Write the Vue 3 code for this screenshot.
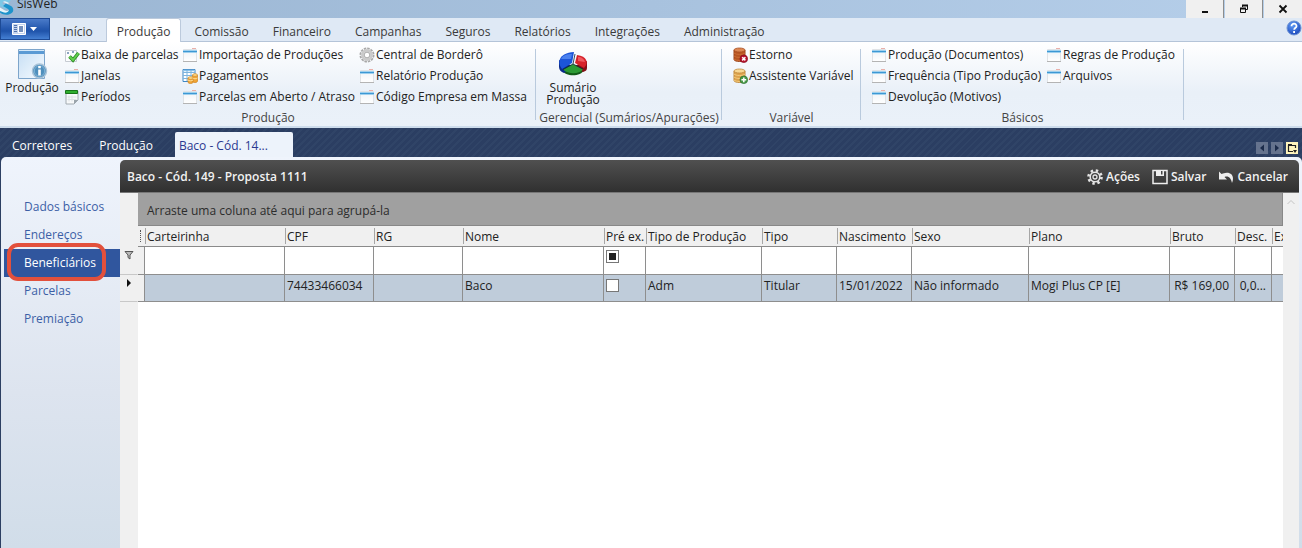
<script setup>
import { ref } from 'vue'

const menuTabs = ['Início', 'Produção', 'Comissão', 'Financeiro', 'Campanhas', 'Seguros', 'Relatórios', 'Integrações', 'Administração']
const activeMenu = ref('Produção')

const ribbonGroups = [
  {
    id: 'producao',
    title: 'Produção',
    big: { label: 'Produção', icon: 'info-window' },
    columns: [
      [
        { label: 'Baixa de parcelas', icon: 'check' },
        { label: 'Janelas', icon: 'window' },
        { label: 'Períodos', icon: 'calendar' }
      ],
      [
        { label: 'Importação de Produções', icon: 'window' },
        { label: 'Pagamentos', icon: 'payments' },
        { label: 'Parcelas em Aberto / Atraso', icon: 'window' }
      ],
      [
        { label: 'Central de Borderô', icon: 'gear' },
        { label: 'Relatório Produção', icon: 'window' },
        { label: 'Código Empresa em Massa', icon: 'window' }
      ]
    ]
  },
  { id: 'gerencial', title: 'Gerencial (Sumários/Apurações)', big: { label: 'Sumário Produção', icon: 'pie' }, columns: [] },
  {
    id: 'variavel',
    title: 'Variável',
    columns: [
      [
        { label: 'Estorno', icon: 'coins-remove' },
        { label: 'Assistente Variável', icon: 'coins-add' }
      ]
    ]
  },
  {
    id: 'basicos',
    title: 'Básicos',
    columns: [
      [
        { label: 'Produção (Documentos)', icon: 'window' },
        { label: 'Frequência (Tipo Produção)', icon: 'window' },
        { label: 'Devolução (Motivos)', icon: 'window' }
      ],
      [
        { label: 'Regras de Produção', icon: 'window' },
        { label: 'Arquivos', icon: 'window' }
      ]
    ]
  }
]

const docTabs = ['Corretores', 'Produção', 'Baco - Cód. 14...']
const activeDoc = ref('Baco - Cód. 14...')

const sections = ['Dados básicos', 'Endereços', 'Beneficiários', 'Parcelas', 'Premiação']
const activeSection = ref('Beneficiários')

const columns = [
  { key: 'carteirinha', label: 'Carteirinha', width: 140 },
  { key: 'cpf', label: 'CPF', width: 89 },
  { key: 'rg', label: 'RG', width: 89 },
  { key: 'nome', label: 'Nome', width: 141 },
  { key: 'preEx', label: 'Pré ex.', width: 42, check: true },
  { key: 'tipoProducao', label: 'Tipo de Produção', width: 116 },
  { key: 'tipo', label: 'Tipo', width: 75 },
  { key: 'nascimento', label: 'Nascimento', width: 75 },
  { key: 'sexo', label: 'Sexo', width: 117 },
  { key: 'plano', label: 'Plano', width: 141 },
  { key: 'bruto', label: 'Bruto', width: 65, right: true },
  { key: 'desc', label: 'Desc.', width: 37, right: true },
  { key: 'ex', label: 'Ex', width: 0 }
]

const rows = ref([
  {
    cpf: '74433466034',
    nome: 'Baco',
    preEx: false,
    tipoProducao: 'Adm',
    tipo: 'Titular',
    nascimento: '15/01/2022',
    sexo: 'Não informado',
    plano: 'Mogi Plus CP [E]',
    bruto: 'R$ 169,00',
    desc: '0,0...'
  }
])
const filters = ref({})
</script>

<template>
  <div class="app">
    <svg class="sprite" aria-hidden="true">
      <defs>
        <linearGradient id="paper" x1="0" y1="0" x2="0" y2="1">
          <stop offset="0" stop-color="#eef2f6" />
          <stop offset="1" stop-color="#fff" />
        </linearGradient>
        <linearGradient id="sky" x1="0" y1="0" x2="1" y2="1">
          <stop offset="0" stop-color="#c5def4" />
          <stop offset="1" stop-color="#f7fbff" />
        </linearGradient>
        <radialGradient id="ball" cx=".4" cy=".3" r=".8">
          <stop offset="0" stop-color="#5f9bf5" />
          <stop offset="1" stop-color="#143fb5" />
        </radialGradient>
      </defs>
      <symbol id="window" viewBox="0 0 16 16">
        <path d="M1.500 2.500h13v12h-13z" fill="url(#paper)" stroke="#e0e3e6" />
        <path d="M1 14.500h14" stroke="#b4b4b4" />
        <path d="M1 4.500h14" stroke="#9fd0ee" stroke-width="3" />
        <path d="M1 4.500h14" stroke="#3c98d4" />
        <path d="M10 1.500h4" stroke="#eab0aa" />
      </symbol>
      <symbol id="check" viewBox="0 0 16 16">
        <path d="M1.500 3.500h11v11h-11z" fill="#fcfdfe" stroke="#c6cbd2" />
        <path d="M3 6h2M8 5h2" stroke="#6788ad" stroke-width="1.500" />
        <path d="M5.500 9.500l3.500 3.500 5.500-7" fill="none" stroke="#2c8b25" stroke-width="3.600" />
        <path d="M5.500 9.500l3.500 3.500 5.500-7" fill="none" stroke="#62cf4e" stroke-width="2" />
      </symbol>
      <symbol id="calendar" viewBox="0 0 16 16">
        <path d="M2 2h12v9l-4 4H2z" fill="#f7f9fa" stroke="#a3abb1" />
        <path d="M1.500 1.500h12v3h-12z" fill="#2fae2f" stroke="#187418" />
        <path d="M3.500 8h9M3.500 10.500h9M5 6.500v6M8 6.500v6" stroke="#dde2e5" />
        <path d="M10 15v-4h4z" fill="#9aa4ab" />
      </symbol>
      <symbol id="payments" viewBox="0 0 16 16">
        <path d="M1 1.500h12v12H1z" fill="#fff" stroke="#3f87c3" />
        <path d="M1.500 2.500h11" stroke="#8cc4ec" stroke-width="1.500" />
        <path d="M1 4.500h12M1 7.500h12M1 10.500h12M5 2v11M9 2v11" stroke="#7db4de" />
        <path d="M6 10v4c0 2 5 2 5 0v-4M10.500 7v6c0 2 5 2 5 0V7" fill="#f0a536" stroke="#d08a2c" stroke-width=".8" />
        <ellipse cx="8.500" cy="10" rx="2.500" ry="1.300" fill="#ffdb88" stroke="#d08a2c" stroke-width=".7" />
        <ellipse cx="13" cy="7" rx="2.500" ry="1.300" fill="#ffdb88" stroke="#d08a2c" stroke-width=".7" />
        <path d="M6 12c1 1 4 1 5 0M10.500 10c1 1 4 1 5 0" fill="none" stroke="#ffe09a" />
      </symbol>
      <symbol id="gear" viewBox="0 0 16 16">
        <circle cx="8" cy="8" r="6.600" fill="none" stroke="#a8a8a8" stroke-width="1.800" stroke-dasharray="2.500 .956" />
        <circle cx="8" cy="8" r="4.600" fill="#e6e6e6" stroke="#cacaca" stroke-width="2.600" />
        <circle cx="8" cy="8" r="2.800" fill="#fff" stroke="#9b9b9b" stroke-width=".8" />
      </symbol>
      <symbol id="coins-remove" viewBox="0 0 16 16">
        <path d="M2 3v9.500c0 2.600 11 2.600 11 0V3" fill="#b75521" stroke="#9c4317" />
        <ellipse cx="7.500" cy="3" rx="5.500" ry="2" fill="#dc8752" stroke="#a84d20" stroke-width=".8" />
        <path d="M2 6c2 2 9 2 11 0M2 9c2 2 9 2 11 0M2 12c2 2 9 2 11 0" fill="none" stroke="#cb6b34" />
        <circle cx="11.800" cy="11.800" r="3.800" fill="#b8122c" stroke="#850a1d" stroke-width=".7" />
        <path d="M10.200 10.200l3.200 3.200M13.400 10.200l-3.200 3.200" stroke="#fff" stroke-width="1.500" />
      </symbol>
      <symbol id="coins-add" viewBox="0 0 16 16">
        <path d="M2 3v9.500c0 2.600 11 2.600 11 0V3" fill="#dda24c" stroke="#c08a3c" />
        <ellipse cx="7.500" cy="3" rx="5.500" ry="2" fill="#f8d893" stroke="#c08a3c" stroke-width=".8" />
        <path d="M2 6c2 2 9 2 11 0M2 9c2 2 9 2 11 0M2 12c2 2 9 2 11 0" fill="none" stroke="#f3cb7c" />
        <circle cx="11.800" cy="11.800" r="3.800" fill="#4c9b49" stroke="#27702c" stroke-width=".7" />
        <path d="M9.400 11.800h4.800M11.800 9.400v4.800" stroke="#fff" stroke-width="1.500" />
      </symbol>
      <symbol id="info-window" viewBox="0 0 32 32">
        <path d="M2.500 1.500h26v29h-26z" fill="url(#sky)" stroke="#7da5cb" />
        <path d="M3 4.500h25" stroke="#5a9ad4" stroke-width="3" />
        <path d="M3 2.500h25" stroke="#d4e8f8" />
        <circle cx="23.500" cy="23" r="7" fill="#4f8fbd" stroke="#a9c3d8" stroke-width="1.500" />
        <circle cx="23.500" cy="23" r="5.200" fill="none" stroke="#7fb3d6" />
        <path d="M23.500 18v2.200M23.500 21.500v6" stroke="#fff" stroke-width="2.600" />
      </symbol>
      <symbol id="pie" viewBox="0 0 30 26">
        <path d="M4 17v2c3 7 19 7 22 0v-3z" fill="#125b18" />
        <path d="M1 9v7c0 3 2 5 5 6l9-7z" fill="#0a2a8c" />
        <path d="M29 10v7c0 2-1 3-4 4l-9-6z" fill="#860f16" />
        <path d="M15 13L5 18.500c5 5 16 5 20 0z" fill="#2c9a34" />
        <path d="M14 12L4 18C-1 12 0 2 16 1z" fill="#1c55d8" />
        <path d="M3 8c2-4 6-5 11-5l-1 5z" fill="#4a80ee" />
        <path d="M17 12l2-8c10 1 12 8 7 13z" fill="#d7222a" />
        <path d="M20 6c4 0 6 2 7 5l-7-1z" fill="#ee5a60" />
        <path d="M15 13L5 18.500M15 13l10 5M15 13l2-10" stroke="#0b2335" stroke-width=".8" />
      </symbol>
    </svg>

    <header class="titlebar">
      <svg class="logo" viewBox="0 0 14 18" aria-hidden="true">
        <path d="M0 0h11L8.500 3 5 1.500C3 1 1.500 2.500 3 4l5 3-2.500 2.500L0 6z" fill="#7cc8e6" />
        <path d="M6 3.500l5 2.500c3 2 3 6 0 7.500-3 2-8 1.500-11-1v-2l5 1.500c3 .8 5-1.500 3-3L3 6z" fill="#1d93cb" />
        <path d="M0 7.500l5 3c1.500.8 3 .5 4-.5-.5 2-3 3-5 2.500L0 11z" fill="#e4f5fb" />
        <path d="M3 2c1-1 2.500-.8 4 0l2 1-1 1-3-1.200z" fill="#e4f5fb" />
      </svg>
      <span class="app-name">SisWeb</span>
      <div class="window-buttons">
        <button type="button" aria-label="Minimizar">
          <svg viewBox="0 0 12 12"><path d="M3 9h6" stroke="#111" stroke-width="2" /></svg>
        </button>
        <button type="button" aria-label="Restaurar">
          <svg viewBox="0 0 12 12"><path d="M4.500 4V2.500h5v4H8M2.500 5.500h5v4h-5z" fill="none" stroke="#111" /><path d="M4 2.500h6M2 5.500h6" stroke="#111" stroke-width="2" /></svg>
        </button>
        <button type="button" aria-label="Fechar">
          <svg viewBox="0 0 12 12"><path d="M2.500 2.500l7 7M9.500 2.500l-7 7" stroke="#111" stroke-width="1.800" /></svg>
        </button>
      </div>
    </header>

    <nav class="menu">
      <button class="app-menu" type="button" aria-label="Menu do aplicativo">
        <svg viewBox="0 0 26 12">
          <path d="M.5.5h13v11H.5z" fill="#c3d4ee" stroke="#fff" />
          <path d="M2 2.500h3M2 4.500h3M2 6.500h3M2 8.500h3" stroke="#5273ad" />
          <path d="M6 2h6v8H6z" fill="#fff" />
          <path d="M7 3h4v6H7z" fill="#7590bd" />
          <path d="M18 4h7l-3.500 4z" fill="#fff" />
        </svg>
      </button>
      <div class="menu-tabs">
        <button v-for="tab in menuTabs" :key="tab" type="button" :class="{ active: tab === activeMenu }" @click="activeMenu = tab">{{ tab }}</button>
      </div>
      <button class="help" type="button" aria-label="Ajuda">
        <svg viewBox="0 0 16 16">
          <circle cx="8" cy="8" r="7" fill="url(#ball)" stroke="#6d93d4" />
          <path d="M5.500 6.200c0-3.400 5.200-3.200 5 0-.1 1.600-2.300 1.500-2.300 3.500M8.100 11v2" fill="none" stroke="#fff" stroke-width="1.800" />
        </svg>
      </button>
    </nav>

    <div class="ribbon">
      <section v-for="group in ribbonGroups" :key="group.id" class="group" :class="group.id">
        <div class="group-body">
          <button v-if="group.big" class="big" type="button">
            <svg aria-hidden="true"><use :href="'#' + group.big.icon" /></svg>
            <span>{{ group.big.label }}</span>
          </button>
          <div v-for="(column, i) in group.columns" :key="i" class="group-column">
            <button v-for="item in column" :key="item.label" class="small" type="button">
              <svg aria-hidden="true"><use :href="'#' + item.icon" /></svg>
              <span>{{ item.label }}</span>
            </button>
          </div>
        </div>
        <div class="group-title">{{ group.title }}</div>
      </section>
    </div>

    <div class="doc-strip">
      <button v-for="doc in docTabs" :key="doc" class="doc-tab" type="button" :class="{ active: doc === activeDoc }" @click="activeDoc = doc">{{ doc }}</button>
      <div class="doc-nav">
        <button type="button" aria-label="Anterior"><svg viewBox="0 0 12 12"><path d="M8 2.500v7L4 6z" fill="#1c2c4b" /></svg></button>
        <button type="button" aria-label="Próxima"><svg viewBox="0 0 12 12"><path d="M4 2.500v7L8 6z" fill="#1c2c4b" /></svg></button>
        <button class="list" type="button" aria-label="Lista de abas">
          <svg viewBox="0 0 12 12"><path d="M7 9.500H2.500v-6h7V6" fill="none" stroke="#222" stroke-width="1.200" /><path d="M2 3h4" stroke="#222" stroke-width="2" /><path d="M7 8h4l-2 3z" fill="#222" /></svg>
        </button>
      </div>
    </div>

    <main class="workspace">
      <nav class="sidebar">
        <button v-for="section in sections" :key="section" type="button" :class="{ active: section === activeSection }" @click="activeSection = section">{{ section }}</button>
      </nav>

      <section class="document">
        <div class="toolbar">
          <h1>Baco - Cód. 149 - Proposta 1111</h1>
          <button type="button">
            <svg viewBox="0 0 16 16">
              <circle cx="8" cy="8" r="6.500" fill="none" stroke="#e4e4e4" stroke-width="2.600" stroke-dasharray="2.400 2.705" />
              <circle cx="8" cy="8" r="4.800" fill="none" stroke="#e4e4e4" stroke-width="1.600" />
              <circle cx="8" cy="8" r="2" fill="none" stroke="#e4e4e4" stroke-width="1.300" />
            </svg>
            Ações
          </button>
          <button type="button">
            <svg viewBox="0 0 16 16"><path d="M1 1.500h14v13H1z" fill="none" stroke="#eee" stroke-width="1.500" /><path d="M4 1h8v6H4z" fill="#eee" /><path d="M9 2h1.500v3.500H9z" fill="#444" /></svg>
            Salvar
          </button>
          <button type="button">
            <svg viewBox="0 0 16 16"><path d="M1 2.500v8h8L6.500 8c4-1.500 6.500 1 7.500 6 3-7-1-12-9-9.500L3.500 5z" fill="#eee" /></svg>
            Cancelar
          </button>
        </div>

        <div class="grid-area">
          <div class="grid-main">
            <div class="group-drop">Arraste uma coluna até aqui para agrupá-la</div>
            <table class="grid">
              <colgroup>
                <col class="col-indicator" />
                <col class="col-grip" />
                <col v-for="col in columns" :key="col.key" :style="col.width ? { width: col.width + 'px' } : null" />
              </colgroup>
              <thead>
                <tr class="head">
                  <td class="indicator"></td>
                  <td class="grip"><i></i></td>
                  <th v-for="col in columns" :key="col.key" scope="col">{{ col.label }}</th>
                </tr>
              </thead>
              <tbody>
                <tr class="filter">
                  <td class="indicator"><svg viewBox="0 0 10 10" aria-hidden="true"><path d="M1 1.500h8L6 5v4L4 7.500V5z" fill="#bbb" stroke="#555" /></svg></td>
                  <td class="grip"></td>
                  <td v-for="col in columns" :key="col.key">
                    <input v-if="col.check" type="checkbox" :indeterminate="true" :aria-label="'Filtrar ' + col.label" />
                    <input v-else v-model="filters[col.key]" type="text" :aria-label="'Filtrar ' + col.label" />
                  </td>
                </tr>
                <tr v-for="(row, i) in rows" :key="i" class="data">
                  <td class="indicator"><svg viewBox="0 0 10 10" aria-hidden="true"><path d="M3 1v8l4-4z" fill="#111" /></svg></td>
                  <td class="grip"></td>
                  <td v-for="col in columns" :key="col.key" :class="{ right: col.right }">
                    <input v-if="col.check" v-model="row[col.key]" type="checkbox" :aria-label="col.label" />
                    <template v-else>{{ row[col.key] }}</template>
                  </td>
                </tr>
              </tbody>
            </table>
            <div class="grid-rest"></div>
          </div>
          <div class="scrollbar">
            <svg viewBox="0 0 10 10" aria-hidden="true"><path d="M1.500 7L5 3.500 8.500 7" fill="none" stroke="#c4c4c4" /></svg>
          </div>
        </div>
      </section>
    </main>
  </div>
</template>

<style>
body {
  margin: 0;
}
</style>

<style scoped>
.app {
  min-height: 100vh;
  display: flex;
  flex-direction: column;
  overflow: hidden;
  font-family: "Open Sans", "Noto Sans", sans-serif;
  font-size: 12px;
  line-height: 16px;
  color: #222;
  background: #2c3f62;
}
.app *,
.app *::before {
  box-sizing: border-box;
}
button {
  font: inherit;
  color: inherit;
  background: none;
  border: 0;
  padding: 0;
  white-space: nowrap;
}
button svg {
  flex: none;
}
.sprite {
  position: absolute;
  width: 0;
  height: 0;
}

.titlebar {
  height: 18px;
  display: flex;
  align-items: flex-start;
  background: linear-gradient(90deg, #9bb6d3, #a8c2de 50%, #b6cfea);
}
.logo {
  width: 14px;
  height: 18px;
}
.app-name {
  margin-left: 3px;
  line-height: 8px;
}
.window-buttons {
  display: flex;
  gap: 1px;
  margin-left: auto;
}
.window-buttons button {
  width: 38px;
  height: 18px;
  display: flex;
  align-items: center;
  justify-content: center;
  background: #f0f0f0;
  border-right: 1px solid #8d8d8d;
}
.window-buttons button:last-child {
  border-right: 0;
}
.window-buttons svg {
  width: 12px;
  height: 12px;
}

.menu {
  height: 24px;
  display: flex;
  background: #dfe9f5;
  border-bottom: 1px solid #b4c4d8;
}
.app-menu {
  width: 50px;
  height: 22px;
  margin-right: 2px;
  display: flex;
  align-items: center;
  justify-content: center;
  background: linear-gradient(#4a7bc9, #2458ae 50%, #1f53aa 60%, #4580d3);
  border: 1px solid #1d4a95;
}
.app-menu svg {
  width: 26px;
  height: 12px;
}
.menu-tabs {
  display: flex;
  gap: 2px;
  align-items: flex-end;
}
.menu-tabs button {
  height: 23px;
  padding: 3px 10px 0;
  border: 1px solid transparent;
  border-bottom: 0;
  border-radius: 3px 3px 0 0;
  color: #3a3a3a;
}
.menu-tabs .active {
  height: 24px;
  margin-bottom: -1px;
  background: #fff;
  border-color: #bccadc;
}
.help {
  width: 16px;
  height: 16px;
  margin: 2px 0 0 auto;
}
.help svg {
  display: block;
}

.ribbon {
  height: 86px;
  display: flex;
  background: linear-gradient(#fff, #e9f0f8 60%, #eaf1f9);
  border-bottom: 2px solid #cddcec;
}
.group {
  display: flex;
  flex-direction: column;
  justify-content: space-between;
  position: relative;
}
.group::before {
  content: '';
  position: absolute;
  right: 0;
  top: 7px;
  bottom: 6px;
  width: 1px;
  background: #b9cadd;
}
.producao {
  width: 536px;
}
.gerencial {
  width: 186px;
}
.variavel {
  width: 139px;
}
.basicos {
  width: 323px;
}
.group-body {
  display: flex;
  padding-top: 2px;
}
.group-column {
  flex: none;
  width: 177px;
}
.producao .group-column:nth-child(2) {
  width: 118px;
}
.variavel .group-body,
.basicos .group-body {
  padding-left: 10px;
}
.basicos .group-column:first-child {
  width: 175px;
}
.group-title {
  height: 16px;
  text-align: center;
  color: #444;
}
.big {
  width: 65px;
  display: flex;
  flex-direction: column;
  align-items: center;
  line-height: 12px;
}
.big svg {
  width: 32px;
  height: 32px;
  margin: 4px 0 2px;
}
.gerencial .big {
  width: 74px;
  white-space: normal;
}
.gerencial .big svg {
  height: 26px;
  margin: 7px 0 5px;
}
.small {
  height: 21px;
  display: flex;
  align-items: center;
  gap: 1px;
}
.small svg {
  width: 16px;
  height: 16px;
}

.doc-strip {
  height: 29px;
  display: flex;
  align-items: flex-end;
  color: #fff;
  background: repeating-linear-gradient(135deg, #2b3e62 0 3px, #304467 3px 5px);
}
.doc-tab {
  height: 25px;
  padding: 3px 12px 0;
  margin-right: 3px;
}
.doc-tab.active {
  width: 118px;
  margin-left: 7px;
  padding: 3px 4px 0;
  text-align: left;
  color: #2b3990;
  background: #edf3fb;
  border-radius: 2px 2px 0 0;
}
.doc-nav {
  display: flex;
  gap: 3px;
  margin-left: auto;
  padding: 0 4px 3px 0;
}
.doc-nav button {
  width: 12px;
  height: 12px;
  background: #65738e;
}
.doc-nav .list {
  background: #fff5bd;
}
.doc-nav svg {
  display: block;
}

.workspace {
  flex: 1;
  display: flex;
  margin-left: 1px;
  padding: 3px 3px 0 0;
  background: linear-gradient(#eff4fc, #dde4ef 60%, #d1dde9);
  border-radius: 5px 5px 0 0;
}
.sidebar {
  width: 119px;
  padding: 33px 0 0 3px;
  display: flex;
  flex-direction: column;
}
.sidebar button {
  height: 28px;
  padding-left: 20px;
  text-align: left;
  color: #3c5fa6;
  position: relative;
}
.sidebar .active {
  color: #fff;
  background: #30569e;
}
.sidebar .active::before {
  content: '';
  position: absolute;
  left: 3px;
  right: 14px;
  top: -6px;
  bottom: -4px;
  border: 4px solid #e2503c;
  border-radius: 11px;
}

.document {
  flex: 1;
  min-width: 0;
  display: flex;
  flex-direction: column;
}
.toolbar {
  height: 33px;
  padding: 2px 11px 0 7px;
  display: flex;
  align-items: center;
  gap: 12px;
  color: #f2f2f2;
  font-weight: 600;
  background: linear-gradient(#505050, #303030);
  border-bottom: 1px solid #777;
  border-radius: 5px 5px 0 0;
}
.toolbar h1 {
  flex: 1;
  margin: 0;
  font-size: 12px;
  font-weight: 600;
}
.toolbar button {
  display: flex;
  align-items: center;
  gap: 3px;
}
.toolbar svg {
  width: 16px;
  height: 16px;
}

.grid-area {
  flex: 1;
  display: flex;
}
.grid-main {
  flex: 1;
  min-width: 0;
  display: flex;
  flex-direction: column;
  background: #f0f0f0;
}
.group-drop {
  height: 33px;
  margin-left: 18px;
  padding: 10px 9px 0;
  color: #2c2c2c;
  background: #a0a0a0;
  border: solid #888;
  border-width: 0 1px 1px 0;
}
.grid {
  width: 100%;
  table-layout: fixed;
  border-collapse: separate;
  border-spacing: 0;
}
.col-indicator {
  width: 18px;
}
.col-grip {
  width: 7px;
}
.grid td,
.grid th {
  padding: 0 2px;
  overflow: hidden;
  white-space: nowrap;
  text-align: left;
  font-weight: 400;
}
.head th,
.head td {
  height: 21px;
  border-bottom: 1px solid #8a8a8a;
}
.grid .head th {
  padding: 2px 0 0 2px;
  background: linear-gradient(#a6a6a6, #a6a6a6) 0 2px / 1px 16px no-repeat;
}
.grip i {
  display: block;
  height: 12px;
  border-left: 1px dotted #555;
}
.filter td,
.data td {
  height: 27px;
  border-right: 1px solid #8e8e8e;
  border-bottom: 1px solid #8e8e8e;
  background: #fff;
}
.filter td {
  height: 28px;
}
.filter td:last-child,
.data td:last-child {
  border-right: 0;
}
.grid .data td {
  padding: 0 5px 4px 2px;
  background: #bfccda;
}
.grid .data .right {
  text-align: right;
}
.grid .data .grip,
.grid .grip {
  background: #f0f0f0;
}
.grid .indicator,
.grid .data .indicator {
  padding: 0 4px;
  vertical-align: top;
  background: #f0f0f0;
  border-right: 1px solid #f0f0f0;
  border-bottom-color: #c8c8c8;
}
.grid .head .indicator {
  border-bottom-color: #f0f0f0;
}
.indicator svg {
  display: block;
  width: 10px;
  height: 10px;
  margin-top: 3px;
}
input[type='text'] {
  display: block;
  width: 100%;
  height: 24px;
  padding: 0;
  border: 0;
  outline: 0;
  font: inherit;
  background: none;
}
input[type='checkbox'] {
  appearance: none;
  display: block;
  width: 13px;
  height: 13px;
  margin: 0 0 8px;
  background: #fff;
  border: 1px solid #777;
}
.data input[type='checkbox'] {
  margin-bottom: 2px;
}
input[type='checkbox']:checked,
input[type='checkbox']:indeterminate {
  background: #222;
  box-shadow: inset 0 0 0 2px #fff;
}
.grid-rest {
  flex: 1;
  margin-left: 18px;
  background: #fff;
}
.scrollbar {
  width: 16px;
  background: #f0f0f0;
}
.scrollbar svg {
  display: block;
  width: 10px;
  height: 10px;
  margin: 4px 3px;
}
</style>
